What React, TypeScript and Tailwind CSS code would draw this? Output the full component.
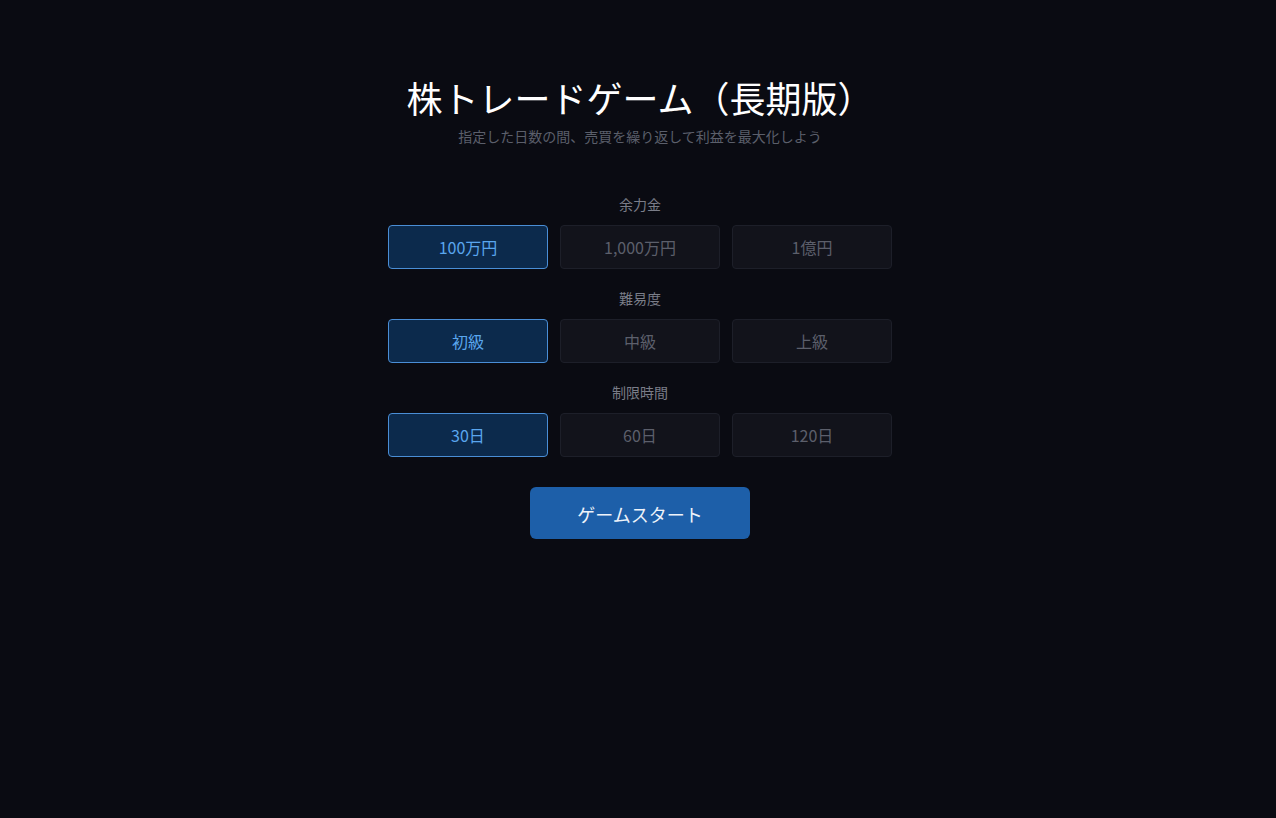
import { useState } from "react"

const FONT = { fontFamily: '"Noto Sans CJK JP", "Noto Sans", sans-serif' }

type OptionGroup = {
  label: string
  options: string[]
}

const GROUPS: OptionGroup[] = [
  { label: "余力金", options: ["100万円", "1,000万円", "1億円"] },
  { label: "難易度", options: ["初級", "中級", "上級"] },
  { label: "制限時間", options: ["30日", "60日", "120日"] },
]

function OptionRow({
  group,
  selected,
  onSelect,
}: {
  group: OptionGroup
  selected: number
  onSelect: (i: number) => void
}) {
  return (
    <div className="flex flex-col items-center">
      <p className="text-sm leading-5 text-[#7a7d88]">{group.label}</p>
      <div className="mt-[11px] grid w-[504px] grid-cols-3 gap-3">
        {group.options.map((opt, i) => (
          <button
            key={opt}
            onClick={() => onSelect(i)}
            className={
              i === selected
                ? "h-[44px] rounded-[4px] border border-[#4a8ed6] bg-[#0c2a4c] text-base text-[#5aa6ee]"
                : "h-[44px] rounded-[4px] border border-[#1d1f29] bg-[#12131b] text-base text-[#5c5f6b]"
            }
          >
            {opt}
          </button>
        ))}
      </div>
    </div>
  )
}

export default function App() {
  const [picks, setPicks] = useState([0, 0, 0])

  return (
    <div style={FONT} className="min-h-[818px] w-full bg-[#0a0b12] pl-[4px] pt-[76px]">
      <div className="flex flex-col items-center">
        {/* タイトル */}
        <h1 className="text-[36px] leading-[43px] text-white">株トレードゲーム（長期版）</h1>
        <p className="mt-[7px] text-sm leading-5 text-[#5b5f6b]">
          指定した日数の間、売買を繰り返して利益を最大化しよう
        </p>

        {/* 設定 */}
        <div className="mt-[48px] flex flex-col gap-[19px]">
          {GROUPS.map((g, gi) => (
            <OptionRow
              key={g.label}
              group={g}
              selected={picks[gi]}
              onSelect={(i) => setPicks(picks.map((p, k) => (k === gi ? i : p)))}
            />
          ))}
        </div>

        <button className="mt-[30px] h-[52px] w-[220px] rounded-[6px] bg-[#1d5fa9] pt-[2px] text-lg text-[#eef3fa]">
          ゲームスタート
        </button>
      </div>
    </div>
  )
}
